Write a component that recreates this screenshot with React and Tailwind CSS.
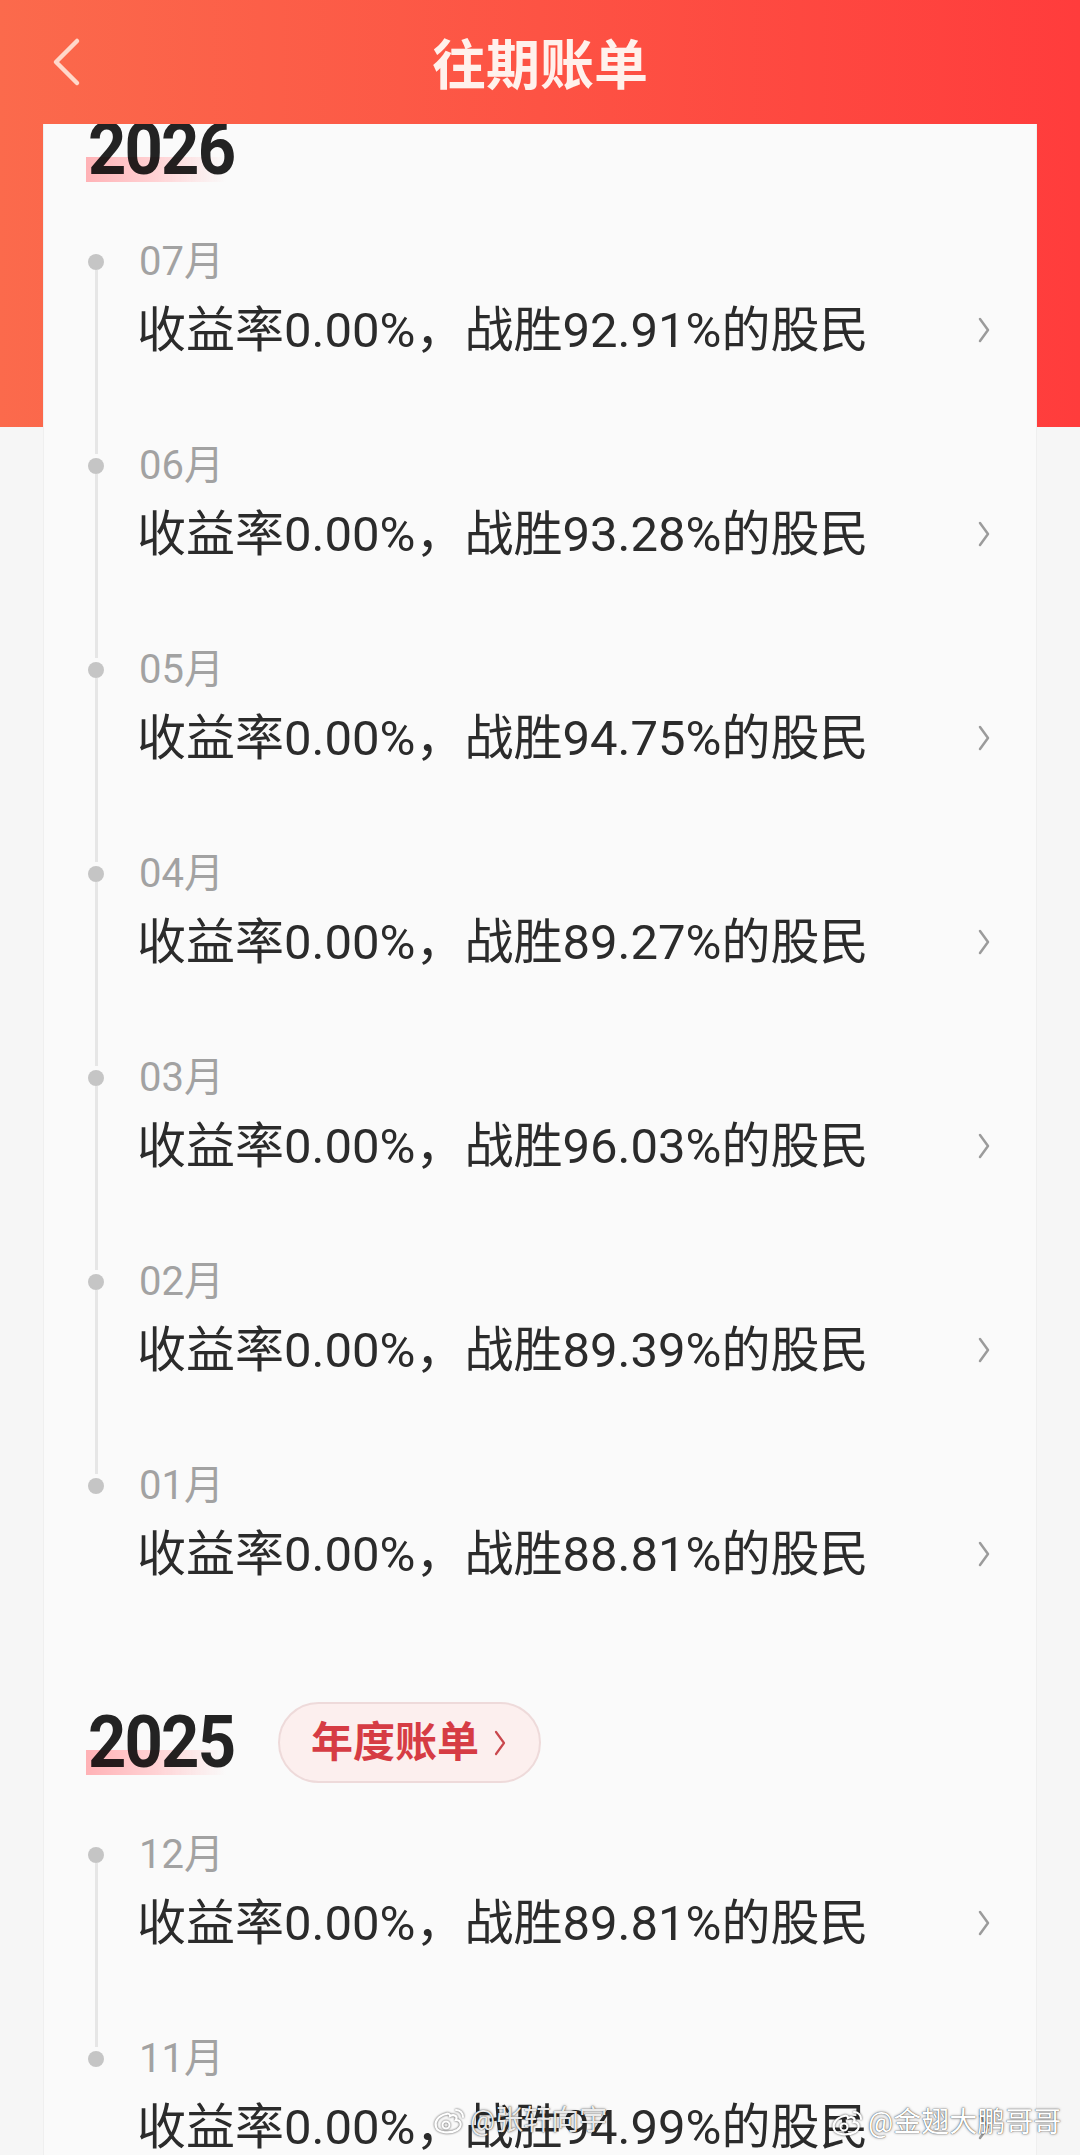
import React from 'react';

const bills = [
  {
    year: '2026',
    annual: false,
    months: [
      { m: '07', pct: '92.91' },
      { m: '06', pct: '93.28' },
      { m: '05', pct: '94.75' },
      { m: '04', pct: '89.27' },
      { m: '03', pct: '96.03' },
      { m: '02', pct: '89.39' },
      { m: '01', pct: '88.81' },
    ],
  },
  {
    year: '2025',
    annual: true,
    months: [
      { m: '12', pct: '89.81' },
      { m: '11', pct: '94.99' },
    ],
  },
];

const Chevron = ({ className, color = '#9b9b9b', w = 2.5 }) => (
  <svg className={className} viewBox="0 0 12 26" fill="none">
    <path d="M2 2 L10 13 L2 24" stroke={color} strokeWidth={w} strokeLinecap="round" strokeLinejoin="round" />
  </svg>
);

const WeiboMark = () => (
  <svg className="h-[30px] w-[34px] shrink-0 drop-shadow-[0_0_1px_rgba(0,0,0,0.7)]" viewBox="0 0 34 30" fill="none">
    <path d="M14 8 C6 10 2 16 4 21 C6 27 18 28 25 24 C31 20 29 14 24 14 C26 10 22 8 18 10 C18 8 16 7 14 8 Z" stroke="white" strokeWidth="2.2" />
    <circle cx="14" cy="19" r="3.5" stroke="white" strokeWidth="2" />
    <path d="M24 4 C28 4 31 7 31 11" stroke="white" strokeWidth="2" strokeLinecap="round" />
  </svg>
);

const YearRow = ({ year, annual, first }) => (
  <div className={`flex h-[81px] items-center pl-[44px] ${first ? '-mt-[15px]' : 'mt-[32px]'}`}>
    <span className="relative isolate inline-block w-[144px] shrink-0 text-[72px] font-bold leading-none text-[#232323]">
      <span className="inline-block origin-left scale-x-[0.93] tracking-[-2px]">{year}</span>
      <span className="absolute left-[-2px] top-[43px] h-[25px] w-[140px] bg-linear-to-r from-[#ffb2b6] via-[#ffd2d4] to-transparent mix-blend-multiply" />
    </span>
    {annual && (
      <div className="ml-[46px] flex h-[81px] w-[263px] items-center gap-[14px] rounded-full border-2 border-[#eedada] bg-[#fcefee] pl-[31px]">
        <span className="text-[42px] font-bold leading-none text-[#d63c44]">年度账单</span>
        <Chevron className="h-[26px] w-[14px]" color="#c9474d" w={2.2} />
      </div>
    )}
  </div>
);

const MonthItem = ({ m, pct, last }) => (
  <div className="flex h-[204px] pl-[44px]">
    <div className="flex w-[16px] flex-col items-center pt-[12px]">
      <div className="size-[16px] shrink-0 rounded-full bg-[#c5c5c5]" />
      {!last && <div className="h-[184px] w-[3px] shrink-0 bg-[#e6e6e6]" />}
    </div>
    <div className="ml-[33px] flex-1 pr-[46px]">
      <div className="flex h-[40px] items-center pl-[2px] text-[40px] leading-none text-[#a2a2a2]">{m}月</div>
      <div className="mt-[20px] flex h-[56px] items-center justify-between">
        <span className="whitespace-nowrap text-[49px] leading-none text-[#2b2b2b]">
          收益率0.00%，战胜{pct}%的股民
        </span>
        <Chevron className="h-[26px] w-[12px]" />
      </div>
    </div>
  </div>
);

export default function App() {
  return (
    <div className="relative h-[2155px] w-[1080px] overflow-hidden bg-[#f6f6f6] bg-[linear-gradient(90deg,#fb6a4c,#ff3c3c)] bg-[length:100%_427px] bg-no-repeat font-['Roboto','Noto_Sans_CJK_SC',sans-serif]">
      {/* Nav bar */}
      <header className="grid h-[124px] grid-cols-[200px_1fr_200px] items-center">
        <div className="pl-[50px]">
          <svg className="h-[50px] w-[32px]" viewBox="0 0 32 50" fill="none">
            <path d="M27 4 L6 25 L27 46" stroke="#ffd8ca" strokeWidth="4.5" strokeLinecap="round" strokeLinejoin="round" />
          </svg>
        </div>
        <h1 className="text-center font-['Noto_Sans_CJK_SC',sans-serif] text-[54px] font-bold leading-none text-[#fff1ec]">
          往期账单
        </h1>
        <div />
      </header>

      {/* Bills card */}
      <main className="mx-[43px] h-[2031px] overflow-hidden border-x border-[#efefef] bg-[#fafafa]">
        {bills.map((b, i) => (
          <section key={b.year}>
            <YearRow year={b.year} annual={b.annual} first={i === 0} />
            <div className="mt-[52px]">
              {b.months.map((it, j) => (
                <MonthItem key={it.m} m={it.m} pct={it.pct} last={j === b.months.length - 1} />
              ))}
            </div>
          </section>
        ))}
      </main>

      {/* Watermarks */}
      <div className="absolute left-[432px] top-[2106px] flex items-center gap-[4px] whitespace-nowrap text-[28px] leading-none text-white/90 [text-shadow:0_0_1px_rgba(0,0,0,0.8),0_0_3px_rgba(0,0,0,0.45)]">
        <WeiboMark />
        <span>@张轩向宇</span>
      </div>
      <div className="absolute left-[830px] top-[2108px] flex items-center gap-[4px] whitespace-nowrap text-[28px] leading-none text-white [text-shadow:0_0_1px_rgba(0,0,0,0.8),0_0_3px_rgba(0,0,0,0.45)]">
        <WeiboMark />
        <span>@金翅大鹏哥哥</span>
      </div>
    </div>
  );
}
